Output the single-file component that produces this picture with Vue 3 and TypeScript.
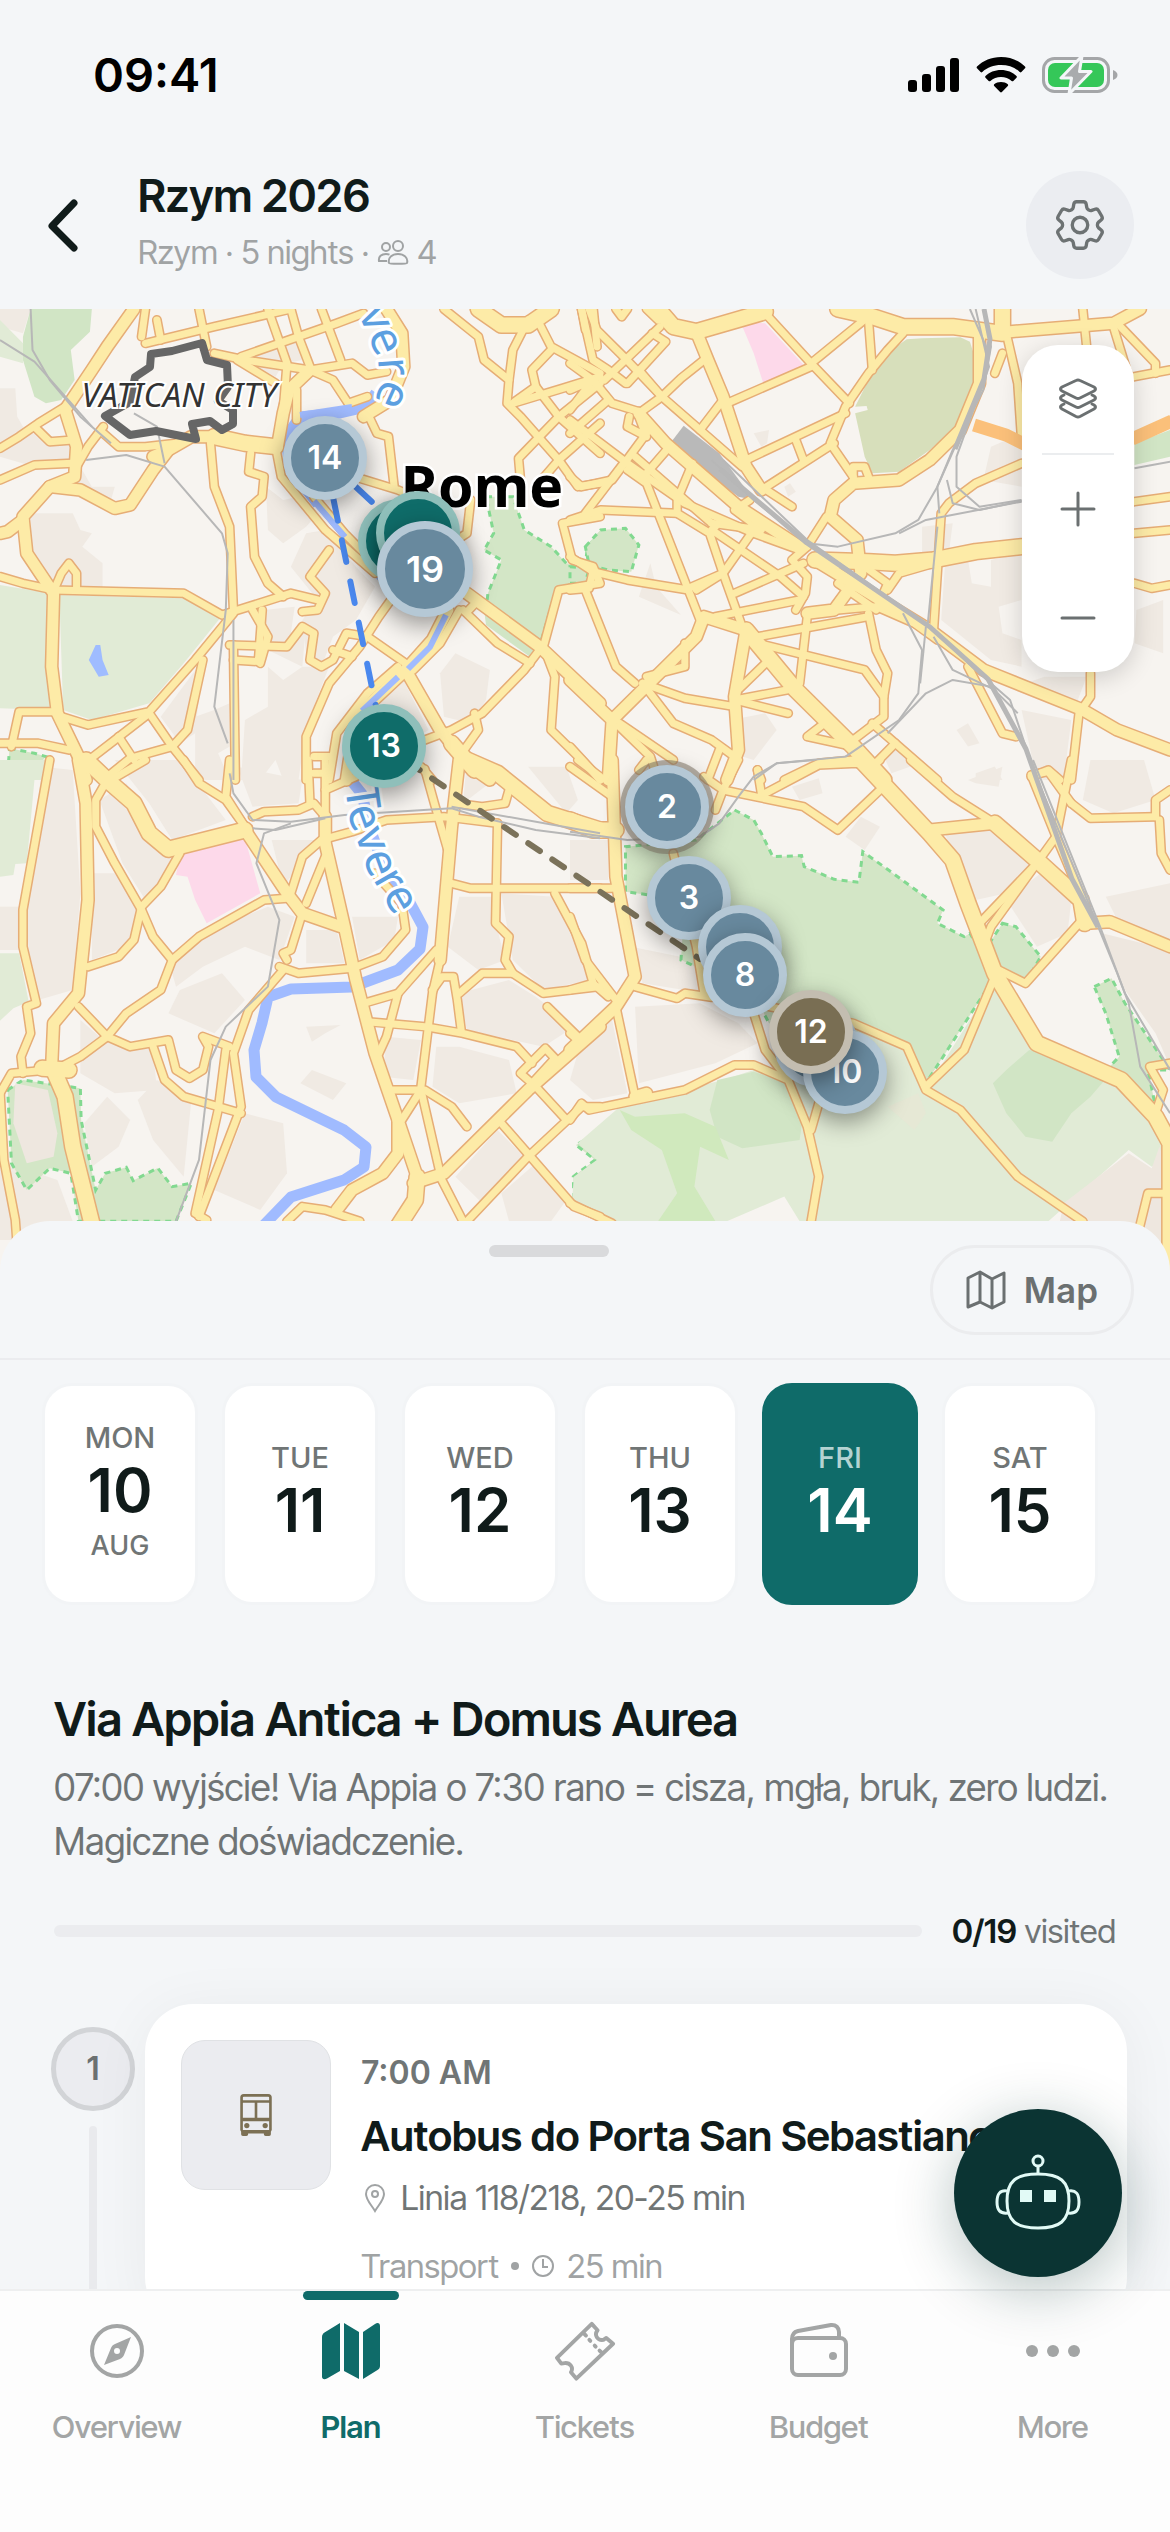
<script setup lang="ts">
import { ref } from 'vue'

interface Area { kind: string; d: string }
interface Tile {
  id: string
  transform: string
  areas: Area[]
  minor: string[]
  major: string[]
  trunk: string[]
  rail: string[]
}
interface Pin { id: string; label: string; x: number; y: number; tone: string; large?: boolean; stacked?: boolean }

const MAP_W = 1170
const MAP_H = 966

const tiles: Tile[] = [
  {
    id: 'nw',
    transform: 'translate(0 -9) scale(.3827 .3333)',
    areas: [
      { kind: 'built', d: '0,27 80,27 60,100 0,80' },
      { kind: 'built', d: '0,265 40,265 45,350 70,400 0,440' },
      { kind: 'built', d: '210,500 240,560 300,560 290,600 220,570 160,570' },
      { kind: 'built', d: '80,640 190,640 210,690 240,700 215,740 268,790 268,865 200,872 140,870 80,760' },
      { kind: 'built', d: '0,410 90,400 180,430 190,490 90,500 0,470' },
      { kind: 'built', d: '630,180 730,145 740,190 720,230' },
      { kind: 'built', d: '740,130 780,120 790,180 745,190' },
      { kind: 'built', d: '695,560 740,600 780,590 830,640 800,680 740,730 700,690' },
      { kind: 'built', d: '800,700 850,690 930,800 980,860 930,960 870,1010 840,1100 800,1060 790,960 830,900 760,800' },
      { kind: 'built', d: '690,930 770,920 760,1000 800,970 790,1100 700,1050' },
      { kind: 'built', d: '700,1100 740,1140 790,1100 860,1100 800,1280 780,1440 740,1440 720,1380 680,1440 630,1440 640,1260 700,1220' },
      { kind: 'built', d: '1150,1120 1190,1060 1280,1110 1270,1200 1230,1270 1160,1250' },
      { kind: 'built', d: '1000,1150 1050,1130 1120,1290 1060,1330 990,1240' },
      { kind: 'built', d: '420,1250 530,1080 510,1300 470,1330' },
      { kind: 'built', d: '510,1250 560,1230 600,1210 600,1340 570,1360 600,1440 510,1440' },
      { kind: 'park', d: '80,27 240,27 235,95 185,150 195,240 160,300 120,310 90,290 60,180 60,110' },
      { kind: 'soft', d: '0,60 60,130 60,190 0,170' },
      { kind: 'soft', d: '0,855 130,880 130,1230 0,1225' },
      { kind: 'soft', d: '155,885 480,895 575,955 480,1090 390,1210 240,1260 165,1230' },
      { kind: 'water', d: '250,1035 262,1035 268,1080 284,1125 258,1130 232,1080' },
      { kind: 'wood', d: '1270,590 1340,590 1370,690 1440,740 1480,790 1540,800 1530,850 1450,880 1410,1040 1270,930 1275,880 1310,780 1265,750 1290,700' },
      { kind: 'park', d: '1265,930 1400,1040 1390,1075 1270,975' },
      { kind: 'wood', d: '25,1345 90,1360 120,1370 70,1440 20,1420' },
      { kind: 'wood', d: '1568,700 1535,740 1530,790 1568,820' }
    ],
    minor: [
      '0,830 60,850 140,870 480,880 580,945 650,920 760,880 830,900',
      '0,445 50,410 100,370 170,320', '0,540 90,495 190,490', '90,380 130,425 190,420',
      '270,380 230,440 200,500', '270,400 310,440 380,440 460,430', '145,860 160,820 180,790 200,820 200,870',
      '550,430 560,560 600,680 610,930', '655,460 650,515 690,530 685,590 655,620 665,770 700,850 740,890',
      '660,930 700,1010 680,1090', '610,940 510,1080 390,1235 230,1275 160,1250',
      '0,1330 100,1330 180,1350', '30,1340 50,1235 140,1235', '390,1240 300,1320 210,1400', '390,1240 450,1340 520,1440',
      '530,1080 490,1290 450,1340 340,1375 270,1440', '310,1310 350,1380', '610,1035 615,1440', '610,1080 675,1085 685,930',
      '600,1035 750,1040 790,980 820,1000 810,1080 840,1100 870,1080 905,1000 960,1010',
      '860,750 810,830 850,880 830,930 790,935', '720,440 735,530 850,690 980,820',
      '820,590 900,700 960,770', '560,160 640,180 810,210 920,190 960,225 1010,215',
      '380,130 560,80 760,27', '630,170 880,70 950,40', '520,27 540,140', '700,27 750,190 740,330', '760,27 780,110 810,200',
      '840,27 890,180', '410,60 420,120', '380,27 370,110', '810,210 870,240 910,310 960,290',
      '620,180 720,250', '775,270 775,360', '960,340 985,400 1015,410 1030,560', '940,535 1040,570 1060,580',
      '1230,600 1220,700 1180,730', '1160,27 1250,110 1265,180 1330,240 1325,310 1360,350 1460,480 1510,560 1568,550',
      '1380,60 1340,150 1330,240', '1400,50 1440,140 1568,220', '1440,150 1390,210 1400,260 1345,305',
      '1340,310 1470,265 1568,230', '1568,250 1460,350 1355,475 1360,540', '1400,260 1460,350 1568,460',
      '1568,370 1460,480 1400,560', '1520,27 1530,90', '1550,27 1560,140', '1568,650 1470,670 1495,780 1550,800 1568,850 1460,870 1420,1040',
      '1210,930 1300,1030 1385,1090', '1410,1050 1370,1110 1260,1240 1180,1290 1110,1320', '1430,1070 1450,1130 1440,1290 1520,1380 1568,1440',
      '1250,900 1225,930', '1200,930 1150,1030 1080,1110', '1040,870 990,950 940,1040 860,1150 800,1310 800,1440',
      '1040,1100 960,1180 880,1300 860,1440', '960,1010 1060,1090', '870,1050 920,1070', '820,1370 860,1370', '1240,1240 1250,1290 1200,1370',
      '1100,1400 1130,1440'
    ],
    major: [
      '350,27 280,140 240,210 170,330 200,440 195,530 130,560 60,650 70,760 140,880 135,1100 150,1240 205,1370 225,1440',
      '130,560 210,570 300,625 340,615 400,510 440,450 500,410 560,410', '0,700 20,695 60,660',
      '1220,880 1410,1040 1568,1210', '1170,930 1130,1020 1060,1110 930,1250 905,1440', '1060,1110 1150,1290 1230,1400 1280,1440',
      '810,210 755,270 740,340 725,440', '1010,27 1050,100 1055,200 1020,300 950,350', '440,450 400,470'
    ],
    trunk: ['560,410 640,430 720,440', '1250,27 1310,75 1380,75 1440,27', '1180,1330 1240,1410'],
    rail: [
      '80,27 85,150 130,240 210,350 290,430', '0,120 90,185 240,380', '225,480 330,465 430,500 580,700 595,760 590,930 560,1220 595,1330',
      '350,340 410,380 430,490', '610,960 610,1440'
    ]
  },
  {
    id: 'ne',
    transform: 'translate(570 -9) scale(.3827 .3333)',
    areas: [
      { kind: 'built', d: '210,790 180,890 240,920 290,945 225,860' },
      { kind: 'built', d: '1100,440 1180,400 1180,560 1080,540' },
      { kind: 'built', d: '980,790 1040,780 1050,850 1100,860 1100,780 1180,760 1180,900 1120,920 1130,1000 1180,1020 1180,1100 1100,1080 970,960' },
      { kind: 'built', d: '1240,1130 1350,1130 1320,1220 1190,1150' },
      { kind: 'built', d: '1480,930 1550,900 1550,1060 1475,1030' },
      { kind: 'built', d: '1180,1230 1310,1260 1290,1440 1220,1440' },
      { kind: 'built', d: '420,1260 510,1240 540,1290 480,1380 450,1370' },
      { kind: 'built', d: '1010,1290 1040,1270 1070,1330 1040,1340' },
      { kind: 'built', d: '1060,1420 1110,1400 1130,1440 1060,1440' },
      { kind: 'built', d: '560,560 575,550 590,575 570,590' },
      { kind: 'built', d: '480,400 520,390 515,430 500,440' },
      { kind: 'built', d: '820,1370 870,1330 890,1400 840,1420' },
      { kind: 'built', d: '920,680 1000,670 990,760 920,760' },
      { kind: 'olive', d: '920,115 1020,112 1045,125 1060,180 1055,260 1010,380 940,450 860,515 790,520 770,470 745,340 778,330 775,318 745,320 780,240 840,150 880,118' },
      { kind: 'pink', d: '445,65 510,70 615,200 505,250 480,160' },
      { kind: 'wood', d: '40,740 80,690 145,685 180,735 160,815 100,810 50,795' },
      { kind: 'wood', d: '0,800 50,805 40,850 0,850' },
      { kind: 'park', d: '1475,430 1568,390 1568,470 1475,495' },
      { kind: 'yard', d: '297,377 390,460 480,600 440,590 375,535 265,425' }
    ],
    minor: [
      '510,40 630,190 730,310', '630,190 790,40', '780,60 790,210', '870,100 830,150 780,220 720,320 680,430 740,530',
      '410,310 630,200', '400,300 340,390', '720,340 460,480', '240,290 290,235 350,180', '50,27 70,90 140,170 240,290 450,500',
      '30,27 60,180 100,210 145,250', '0,190 60,240 110,310 180,335', '120,27 135,50 150,27', '200,27 230,60', '235,80 90,240', '215,100 250,125 150,250', '0,270 60,240 0,330',
      '180,210 240,290 180,340', '0,400 100,300', '0,360 150,490 300,610 480,700 600,750', '140,490 40,640', '0,530 30,560 110,540 200,400',
      '155,350 150,380 200,410 180,350', '0,660 80,630 280,640', '170,470 380,680', '260,440 200,520', '150,510 200,550 340,960', '320,490 280,600 280,640 365,700 400,820 450,980', '370,690 550,830 610,890',
      '480,690 400,820 310,865', '470,600 430,630 500,690 370,670', '580,620 500,560', '670,650 620,740', '310,870 150,840 60,815 0,770', '0,870 50,865 60,815',
      '40,870 120,1100 170,1150', '190,1150 300,1195 430,1220', '190,1150 270,1270 370,1320 430,1370', '120,1270 210,1370 230,1440',
      '130,1270 270,1380', '200,1130 300,1100 300,1030', '430,1200 590,1165', '430,1200 570,1240', '430,1180 520,1080',
      '490,1010 780,950', '620,950 600,1150', '490,1030 770,1110 820,1190 820,1250 740,1320', '780,940 800,1050 830,1120 820,1190',
      '620,740 580,780 620,830 615,880 590,930', '430,880 610,790', '380,950 600,900', '950,990 970,640 990,610 1060,550 1180,490',
      '830,870 860,820 950,790', '770,800 830,850 800,930 700,850', '1140,100 1170,250 1180,420', '1130,160 1110,220', '1430,70 1530,190 1530,220',
      '1340,27 1350,140', '1420,80 1460,230', '1475,230 1568,210', '1475,605 1568,590', '1475,700 1568,690', '1475,850 1520,865 1568,855',
      '1360,1120 1360,1190 1330,1240 1310,1440', '1040,1100 1130,1300 1165,1310', '790,1270 960,1440', '850,1330 790,1400',
      '740,1380 650,1390 560,1440', '740,1340 620,1310 665,1270', '490,1410 500,1440', '590,420 610,480', '500,570 690,430', '740,530 740,500 770,500 780,530',
      '0,1340 80,1440', '390,1350 360,1440', '1205,1430 1250,1410 1280,1440', '700,930 800,920 900,970 960,1020', '330,870 400,820'
    ],
    major: [
      '330,95 360,180 400,290 460,500 500,570', '180,340 250,430 440,620 600,740', '0,1140 110,1260 100,1440',
      '110,1260 330,1010 350,950 460,990', '460,990 430,1190 440,1350 410,1440', '640,780 940,990 1080,1110 1340,1230 1430,1290 1568,1350',
      '620,940 690,930 760,820 750,720 680,650 690,600 740,550 860,540 940,480 1020,390 1070,250 1070,90', '1150,95 1420,70 1490,27'
    ],
    trunk: [
      '230,27 270,80 330,95 510,35', '700,27 790,50 870,80 1000,80 1130,100 1130,27', '460,990 590,1170 740,1340 820,1440',
      '640,780 780,785 850,790 950,780 1060,755 1180,740'
    ],
    rail: [
      '370,480 480,600 620,730 700,740 850,700 910,660 960,560 1000,450 1080,270 1100,140 1080,27', '400,480 620,720 940,980 1050,1100 1150,1200 1220,1440',
      '1180,600 1070,620 1010,560 1010,470 1095,200 1060,27', '1180,605 930,660 860,700', '960,680 935,970', '985,540 1000,610 1070,630 1180,603',
      '870,940 920,1050 910,1180 860,1260 720,1370 540,1390 480,1440', '930,980 915,1150', '950,1010 1000,1110 1110,1170', '1170,1240 1100,1160 1000,1140 930,1180 830,1300',
      '1475,505 1568,485', '965,640 960,560 1010,430', '1045,27 1095,160'
    ]
  },
  {
    id: 'sw',
    transform: 'translate(0 451) scale(.3827 .3333)',
    areas: [
      { kind: 'built', d: '110,20 190,30 210,400 190,690 100,720 75,600 70,420' },
      { kind: 'built', d: '260,120 330,70 420,240 600,240 470,290 380,420 320,310' },
      { kind: 'built', d: '300,0 470,0 590,180 450,240 390,130' },
      { kind: 'built', d: '0,440 50,440 50,570 0,570' },
      { kind: 'built', d: '240,340 300,340 360,450 330,560 240,600' },
      { kind: 'built', d: '700,440 770,470 730,600 640,560 530,620 460,680 440,600 530,520' },
      { kind: 'built', d: '470,690 580,640 640,720 560,820 440,760' },
      { kind: 'built', d: '210,780 270,840 400,870 410,990 300,1000 210,940' },
      { kind: 'built', d: '360,1020 410,960 500,1020 480,1250 400,1140' },
      { kind: 'built', d: '640,1060 740,1090 750,1240 680,1350 560,1290' },
      { kind: 'built', d: '620,20 790,60 780,130 660,140' },
      { kind: 'built', d: '710,240 830,240 740,380' },
      { kind: 'built', d: '800,800 890,795 850,820 815,845' },
      { kind: 'built', d: '815,930 905,970 870,1020 785,970' },
      { kind: 'built', d: '800,510 880,510 900,610 800,610' },
      { kind: 'built', d: '920,470 1040,470 1030,540 940,600' },
      { kind: 'built', d: '1200,410 1290,410 1300,510 1320,600 1250,630 1170,560' },
      { kind: 'built', d: '1310,400 1450,410 1520,560 1540,660 1420,690 1340,600' },
      { kind: 'built', d: '1220,0 1290,60 1210,130' },
      { kind: 'built', d: '1380,20 1480,20 1510,120 1480,160' },
      { kind: 'built', d: '1200,700 1330,660 1400,710 1500,800 1420,860 1220,810' },
      { kind: 'built', d: '1010,830 1100,840 1080,960 1000,950' },
      { kind: 'built', d: '1140,860 1200,860 1330,900 1350,1000 1200,1030 1130,980' },
      { kind: 'built', d: '1190,1250 1300,1110 1370,1190 1260,1330' },
      { kind: 'built', d: '1400,1210 1480,1320 1440,1384 1330,1384 1310,1300' },
      { kind: 'built', d: '220,1090 280,1010 340,1080 310,1160 240,1220' },
      { kind: 'built', d: '0,1230 20,1210 150,1260 190,1384 60,1440 0,1440' },
      { kind: 'soft', d: '0,0 120,0 120,60 90,60 70,310 40,312 35,345 0,350' },
      { kind: 'soft', d: '0,580 50,580 75,725 35,745 0,782' },
      { kind: 'wood', d: '20,990 60,960 210,985 212,1080 250,1290 275,1240 330,1222 348,1262 412,1224 450,1280 500,1270 460,1384 205,1384 185,1240 130,1225 70,1290 30,1210' },
      { kind: 'built-solid', d: '40,970 125,990 150,1120 140,1190 70,1210 35,1090' },
      { kind: 'wood', d: '1568,1100 1545,1130 1505,1155 1555,1200 1498,1250 1500,1330 1568,1370' },
      { kind: 'pink', d: '470,285 640,235 680,400 540,490 510,420 490,350 460,345' }
    ],
    minor: [
      '480,0 520,70 590,120 640,200', '600,0 590,110 640,200', '660,170 690,155 780,150 820,130 850,170', '380,0 290,60',
      '280,60 250,120 250,200 300,310 370,450 400,530 450,600 420,690 330,760 280,830 210,890 160,920', '470,280 420,380 370,440 350,540 310,590 230,620',
      '450,600 520,530 690,420 750,415', '205,740 280,830 340,860 440,840 460,930 495,955 530,930 545,860 530,830 600,860',
      '400,860 430,960 480,1010 630,1060', '130,0 60,450 60,560 95,730 70,740 80,820 55,890 60,940', '0,1000 30,940 130,930', '0,990 10,1200 40,1380 50,1540',
      '740,630 650,750 610,880 630,1040 520,1370', '590,870 570,1050 510,1360 540,1380', '805,0 810,130', '850,0 850,170', '730,620 780,640 920,625 1000,590 1060,510 1050,430 980,340',
      '750,600 740,580 760,570 790,460', '760,400 790,290 840,240 920,215 1010,180 1160,170 1300,190', '1190,130 1260,140 1320,130 1330,90', '800,430 850,290', '850,90 930,50',
      '820,40 850,40', '950,730 1040,700 1140,570', '1040,700 1010,830 990,880', '960,785 1110,800 1210,820 1350,860 1390,910', '1110,27 1135,130 1170,270',
      '1180,370 1230,385 1568,385', '1300,190 1295,490 1330,530 1320,600 1340,640 1420,700 1568,680', '1130,690 1155,650 1185,650 1195,720 1205,810',
      '1200,700 1260,640 1340,640', '1450,400 1520,550 1550,670', '1150,1250 1210,1384', '1010,990 1110,990 1180,1040 1220,1100', '1100,990 1150,1240',
      '1100,990 1050,1080', '1430,740 1510,830', '1400,980 1480,1080', '1310,1090 1500,1340 1568,1370', '1220,1384 1380,1190 1520,1040 1568,1040',
      '750,1384 790,1340 850,1350 940,1384', '1360,940 1425,865 1450,895 1390,970 1360,940', '1150,600 1130,700 1100,980', '1510,0 1568,50'
    ],
    major: [
      '205,0 225,130 230,420 205,700 140,790 135,920', '640,210 750,400 790,460 890,500', '1200,0 1180,200 1150,600',
      '850,170 850,250 900,500 930,660 980,880 1040,1080 1090,1250', '1040,1080 1040,1180 1000,1240 920,1290 880,1350', '1568,800 1380,990 1160,1240 1080,1270'
    ],
    trunk: [
      '225,0 280,60 350,130 390,220 440,268 640,210', '140,930 170,1010 190,1160 240,1390', '1220,0 1300,40 1430,160 1568,210', '1090,1250 1085,1320 1040,1400', '110,925 180,930'
    ],
    rail: [
      '600,40 610,100 660,180 760,185 900,165 1180,145 1250,170 1400,210 1568,235', '1180,140 1568,220', '760,190 690,220 670,310 730,480 700,680 590,800 550,900 520,1200 460,1384', '660,205 720,210 850,175'
    ]
  },
  {
    id: 'se',
    transform: 'translate(570 451) scale(.3827 .3333)',
    areas: [
      { kind: 'built', d: '580,80 650,55 660,100 600,120' },
      { kind: 'built', d: '760,170 810,200 770,270 720,230' },
      { kind: 'built', d: '1040,60 1130,20 1120,80 1060,70' },
      { kind: 'built', d: '980,220 1110,210 1210,310 1140,400 1060,420 1010,320' },
      { kind: 'built', d: '1360,0 1500,0 1530,120 1420,160 1340,120' },
      { kind: 'built', d: '1140,420 1230,340 1310,420 1300,520 1220,560' },
      { kind: 'built', d: '1400,410 1568,370 1568,540 1430,480' },
      { kind: 'built-solid', d: '1390,520 1568,570 1568,920 1530,820 1450,690' },
      { kind: 'built', d: '0,520 40,600 20,660 0,660' },
      { kind: 'built', d: '170,740 340,730 440,790 490,850 380,910 180,970' },
      { kind: 'built', d: '20,880 110,780 150,1000 60,1020 0,960' },
      { kind: 'built', d: '160,560 330,600 350,700 190,670' },
      { kind: 'built', d: '0,240 100,240 100,360 0,360' },
      { kind: 'wood', d: '430,150 480,180 500,220 530,290 605,287 612,320 690,358 755,367 765,275 820,320 975,450 960,490 1030,530 1045,520 1110,650 930,970 880,870 740,790 520,790 480,700 290,600 300,420 145,395 145,260 330,240' },
      { kind: 'soft', d: '130,1040 260,1000 400,960 480,930 560,960 520,780 740,790 880,860 930,990 1110,660 1220,850 1440,960 1568,1150 1568,1200 1520,1220 1460,1170 1250,1384 600,1384 560,1310 410,1384 100,1384 5,1330 10,1250 70,1200 20,1150' },
      { kind: 'park', d: '385,960 480,935 570,970 610,1060 600,1140 450,1165 385,1130 365,1050' },
      { kind: 'park', d: '1140,930 1200,870 1420,930 1360,1010 1310,1060 1260,1145 1190,1130 1140,1060 1105,970' },
      { kind: 'lawn', d: '130,1050 170,1070 300,1060 380,1100 415,1200 340,1160 325,1280 380,1384 230,1384 280,1300 240,1170 160,1110' },
      { kind: 'pale', d: '830,1040 910,1000 930,1060 900,1110' },
      { kind: 'wood', d: '1130,490 1165,500 1230,590 1190,670 1120,630 1090,560' },
      { kind: 'wood', d: '1370,680 1415,655 1450,730 1568,930 1510,930 1530,1040 1410,920 1435,890 1400,760' },
      { kind: 'built-solid', d: '1460,1180 1520,1225 1540,1160 1568,1250 1568,1500 1380,1500 1280,1384 1290,1330' }
    ],
    minor: [
      '0,385 110,385', '0,470 40,600 120,720', '0,690 60,670 100,710', '0,20 110,110', '170,680 280,715 300,700 370,712 450,700 520,740 740,790 880,860 930,990 1020,1050 1170,1250 1340,1384',
      '120,740 170,1010', '0,1080 30,1030 50,1050 300,990 430,915 480,915 570,960 620,1100 650,1250 630,1384', '480,760 510,870 570,960', '650,1030 630,1110',
      '270,280 330,560 350,700', '400,90 610,140 700,210 810,90', '200,0 180,30', '350,50 400,90 440,0', '500,100 490,30', '510,100 650,15 750,10 790,20 810,0',
      '890,0 1000,110 1110,190', '1220,310 1070,490', '1080,560 1100,500 1270,230 1310,0', '1330,490 1190,670 1120,630', '1110,650 1030,870 930,980',
      '1310,130 1250,35 1205,45 1270,230 1340,420', '1310,130 1360,175 1530,170', '1530,170 1530,120 1568,90', '1540,180 1545,280 1568,330', '1568,910 1515,920 1550,990 1530,1060',
      '1480,1440 1510,1300 1568,1300', '0,1330 110,1390', '0,820 30,850', '400,90 380,150'
    ],
    major: ['110,0 120,350 170,650 120,740 0,870', '940,210 1110,190', '1350,490 1410,485 1568,560', '170,1010 200,1000'],
    trunk: ['0,180 60,210 120,210', '760,0 940,220 1000,300 1040,430 1110,640 1220,850 1440,960 1530,1070 1568,1150 1568,1540', '1110,190 1220,300 1335,420 1345,490'],
    rail: ['1200,0 1280,220 1380,500 1430,640 1460,730 1490,920 1568,1060', '1210,0 1385,500 1450,700 1568,930', '640,0 540,10 480,50 440,110 390,190 340,230 150,240 0,215']
  }
]

const pins: Pin[] = [
  { id: 'p2', label: '2', x: 667, y: 498, tone: 'slate', stacked: true },
  { id: 'p3', label: '3', x: 689, y: 589, tone: 'slate' },
  { id: 'p7', label: '', x: 740, y: 638, tone: 'slate' },
  { id: 'p8', label: '8', x: 745, y: 666, tone: 'slate' },
  { id: 'p9', label: '', x: 816, y: 736, tone: 'slate' },
  { id: 'p10', label: '10', x: 845, y: 763, tone: 'slate' },
  { id: 'p12', label: '12', x: 811, y: 723, tone: 'umber' },
  { id: 'p13', label: '13', x: 384, y: 437, tone: 'teal' },
  { id: 'p14', label: '14', x: 325, y: 149, tone: 'slate' },
  { id: 'p15', label: '', x: 400, y: 232, tone: 'teal' },
  { id: 'p16', label: '', x: 418, y: 224, tone: 'teal' },
  { id: 'p19', label: '19', x: 425, y: 260, tone: 'slate', large: true }
]

const days = [
  { name: 'MON', date: 10, month: 'AUG' },
  { name: 'TUE', date: 11 },
  { name: 'WED', date: 12 },
  { name: 'THU', date: 13 },
  { name: 'FRI', date: 14 },
  { name: 'SAT', date: 15 }
]
const selectedDay = ref(14)

const tabs = ['Overview', 'Plan', 'Tickets', 'Budget', 'More']
const activeTab = ref('Plan')

const pinStyle = (pin: Pin) => ({
  left: `${(pin.x / MAP_W) * 100}%`,
  top: `${(pin.y / MAP_H) * 100}%`
})
</script>

<template>
  <div class="screen">
    <div class="status">
      <span class="clock">09:41</span>
      <div class="status-icons">
        <svg width="52" height="36" viewBox="0 0 52 36" aria-hidden="true">
          <rect x="0" y="23" width="9" height="12" rx="3" />
          <rect x="14" y="17" width="9" height="18" rx="3" />
          <rect x="28" y="9" width="9" height="26" rx="3" />
          <rect x="42" y="1" width="9" height="34" rx="3" />
        </svg>
        <svg width="50" height="36" viewBox="0 0 50 36" aria-hidden="true">
          <path d="M25 0C34.500 0 43 3.600 49 9.600c.5.500.5 1.200 0 1.700l-3.600 3.700c-.5.500-1.200.5-1.700 0C38.700 10.300 32.300 8 25 8S11.300 10.300 6.300 15c-.5.500-1.200.5-1.700 0L1 11.300c-.5-.5-.5-1.200 0-1.700C7 3.600 15.500 0 25 0Z" />
          <path d="M25 13c6.200 0 11.800 2.300 15.500 6 .5.500.5 1.200 0 1.700l-3.200 3.200c-.5.500-1.200.5-1.700 0-2.800-2.500-6.500-3.900-10.600-3.900s-7.800 1.400-10.600 3.900c-.5.500-1.200.5-1.700 0L9.500 20.700c-.5-.5-.5-1.200 0-1.700C13.200 15.300 18.800 13 25 13Z" />
          <path d="M25 25c2.800 0 5 .8 6.800 2.200.5.500.5 1.200 0 1.700l-5.900 6.200c-.5.500-1.300.5-1.800 0l-5.900-6.200c-.5-.5-.5-1.200 0-1.700C20 25.800 22.200 25 25 25Z" />
        </svg>
        <svg class="battery" width="76" height="38" viewBox="0 0 76 38" aria-hidden="true">
          <rect x="1.500" y="2.500" width="65" height="33" rx="11" fill="none" stroke="#a4a6a8" stroke-width="3" />
          <path d="M71 14c3 1 4.500 3 4.500 5s-1.500 4-4.500 5Z" fill="#a4a6a8" />
          <rect x="6" y="7" width="56" height="24" rx="7" fill="#35c759" />
          <path d="M40 0 19 22h10.500L27 38 49 15.500H37.500Z" fill="#a9abad" stroke="#f4f6f8" stroke-width="3" stroke-linejoin="round" />
        </svg>
      </div>
    </div>

    <header class="top">
      <button class="back" type="button" aria-label="Back">
        <svg width="48" height="60" viewBox="0 0 48 60" aria-hidden="true"><path d="M38 8 16 31l22 22" /></svg>
      </button>
      <div class="trip">
        <h1>Rzym 2026</h1>
        <p>
          <span>Rzym · 5 nights ·</span>
          <svg width="32" height="26" viewBox="0 0 32 26" aria-hidden="true">
            <circle cx="21" cy="7" r="5" /><circle cx="9" cy="8" r="4" />
            <path d="M12 24c-1.500-5 3-9 9-9s10.500 4 9 9c-.5 1-17.500 1-18 0ZM10 22H2c-.8-4.500 2.500-7 7-7 1.500 0 2.500.2 3.500.6" />
          </svg>
          <span>4</span>
        </p>
      </div>
      <button class="gear" type="button" aria-label="Settings">
        <svg width="62" height="62" viewBox="0 0 24 24" aria-hidden="true">
          <path d="M9.594 3.940c.09-.542.56-.94 1.110-.94h2.593c.55 0 1.020.398 1.110.94l.213 1.281c.063.374.313.686.645.87.074.04.147.083.22.127.325.196.72.257 1.075.124l1.217-.456a1.125 1.125 0 0 1 1.370.49l1.296 2.247a1.125 1.125 0 0 1-.26 1.431l-1.003.827c-.293.241-.438.613-.43.992a7.723 7.723 0 0 1 0 .255c-.008.378.137.75.43.991l1.004.827c.424.35.534.955.26 1.430l-1.298 2.247a1.125 1.125 0 0 1-1.369.491l-1.217-.456c-.355-.133-.75-.072-1.076.124a6.470 6.470 0 0 1-.22.128c-.331.183-.581.495-.644.869l-.213 1.281c-.09.543-.56.94-1.110.94h-2.594c-.55 0-1.019-.398-1.110-.94l-.213-1.281c-.062-.374-.312-.686-.644-.87a6.520 6.520 0 0 1-.22-.127c-.325-.196-.72-.257-1.076-.124l-1.217.456a1.125 1.125 0 0 1-1.369-.49l-1.297-2.247a1.125 1.125 0 0 1 .26-1.431l1.004-.827c.292-.24.437-.613.43-.991a6.932 6.932 0 0 1 0-.255c.007-.38-.138-.751-.43-.992l-1.004-.827a1.125 1.125 0 0 1-.26-1.430l1.297-2.247a1.125 1.125 0 0 1 1.370-.491l1.216.456c.356.133.751.072 1.076-.124.072-.044.146-.086.22-.128.332-.183.582-.495.644-.869l.214-1.280Z" />
          <circle cx="12" cy="12" r="3" />
        </svg>
      </button>
    </header>

    <main class="body">
      <section class="map" aria-label="Map of Rome">
        <svg class="canvas" :viewBox="`0 0 ${MAP_W} ${MAP_H}`" preserveAspectRatio="none" aria-hidden="true">
          <g v-for="t in tiles" :key="t.id + 'a'" :transform="t.transform">
            <polygon v-for="(a, i) in t.areas" :key="i" :points="a.d" :class="a.kind" />
          </g>
          <path class="river" d="M376 84 366 98 340 104 300 108 286 128 290 160 318 195" />
          <path class="river narrow" d="M318 195 362 250 400 290 M446 300 428 338 402 365" />
          <path class="river" d="M402 365 358 405 348 440 350 470 362 485 370 520 385 560 408 590 423 618 420 640 398 661 352 678 291 680 268 688 262 714 254 741 256 768 276 788 344 821 366 838 364 858 344 871 291 888 262 918" />
          <template v-for="w in ['minor', 'major', 'trunk'] as const" :key="w">
            <g v-for="t in tiles" :key="t.id + w" :transform="t.transform" :class="['casing', w]">
              <polyline v-for="(r, i) in t[w]" :key="i" :points="r" />
            </g>
          </template>
          <template v-for="w in ['minor', 'major', 'trunk'] as const" :key="w + 'f'">
            <g v-for="t in tiles" :key="t.id + w" :transform="t.transform" :class="['paving', w]">
              <polyline v-for="(r, i) in t[w]" :key="i" :points="r" />
            </g>
          </template>
          <path class="river narrow" d="M314 192 345 228M446 306 430 338 408 360M398 368 362 402M300 106 352 98" />
          <path class="motorway" d="M974 116 1006 126 1030 138M1132 130 1172 112" />
          <g v-for="t in tiles" :key="t.id + 'r'" :transform="t.transform" class="rails">
            <polyline v-for="(r, i) in t.rail" :key="i" :points="r" />
          </g>
          <path class="thick-rail" d="M720 160 807 234 930 318 988 370 1026 440 1072 570 1098 618M984 0 990 30 984 70 955 140" />
          <path class="border" d="M151 45 172 42 202 34 207 51 227 56 228 78 218 92 233 101 233 115 222 121 210 112 192 115 196 130 156 122 130 126 105 107 130 93 135 68 150 58Z" />
          <text class="country" x="179" y="98">VATICAN CITY</text>
          <text class="city" x="482" y="198">Rome</text>
          <path id="river-north" d="M358 4 378 50 380 78 362 118 350 140" fill="none" />
          <path id="river-south" d="M345 478 350 512 368 562 396 610 430 660" fill="none" />
          <text class="stream"><textPath href="#river-north">vere</textPath></text>
          <text class="stream"><textPath href="#river-south">Tevere</textPath></text>
          <path class="route blue" d="M325 149 384 437" />
          <path class="route blue" d="M325 149 418 236" />
          <path class="route umber-line" d="M384 437 700 650" />
        </svg>
        <button
          v-for="pin in pins"
          :key="pin.id"
          type="button"
          :class="['pin', pin.tone, { large: pin.large, stacked: pin.stacked }]"
          :style="pinStyle(pin)"
          :aria-label="pin.label ? undefined : 'Stop'"
        >{{ pin.label }}</button>
        <div class="tools">
          <button type="button" aria-label="Layers">
            <svg width="44" height="44" viewBox="0 0 44 44" aria-hidden="true">
              <path d="M20 2.500q2-1 4 0L38 9q3 2 0 4l-14 7q-2 1-4 0L6 13q-3-2 0-4Z" />
              <path d="m8 17-2 1q-3 2 0 4l14 7q2 1 4 0l14-7q3-2 0-4l-2-1" />
              <path d="m8 26-2 1q-3 2 0 4l14 7.500q2 1 4 0L38 31q3-2 0-4l-2-1" />
            </svg>
          </button>
          <hr>
          <button type="button" aria-label="Zoom in">
            <svg width="44" height="44" viewBox="0 0 44 44" aria-hidden="true"><path d="M22 6v32M6 22h32" /></svg>
          </button>
          <button type="button" aria-label="Zoom out">
            <svg width="44" height="44" viewBox="0 0 44 44" aria-hidden="true"><path d="M6 22h32" /></svg>
          </button>
        </div>
      </section>

      <section class="sheet">
        <div class="sheet-head">
          <span class="handle"></span>
          <button class="map-button" type="button">
            <svg width="40" height="40" viewBox="0 0 40 40" aria-hidden="true">
              <path d="M2 8 14 2v30L2 37ZM14 2l12 7v29l-12-6M26 9l12-6v29l-12 6" />
            </svg>
            Map
          </button>
        </div>

        <div class="days">
          <button
            v-for="d in days"
            :key="d.date"
            type="button"
            :class="['day', { active: d.date === selectedDay }]"
            @click="selectedDay = d.date"
          >
            <span class="name">{{ d.name }}</span>
            <span class="date">{{ d.date }}</span>
            <span v-if="d.month" class="month">{{ d.month }}</span>
          </button>
        </div>

        <div class="intro">
          <h2>Via Appia Antica + Domus Aurea</h2>
          <p>07:00 wyjście! Via Appia o 7:30 rano = cisza, mgła, bruk, zero ludzi. Magiczne doświadczenie.</p>
          <div class="progress">
            <span class="track"></span>
            <span class="count"><b>0/19</b> visited</span>
          </div>
        </div>

        <div class="stop">
          <div class="rail-col">
            <span class="index">1</span>
            <span class="line"></span>
          </div>
          <article class="card">
            <div class="thumb">
              <svg width="36" height="48" viewBox="0 0 36 48" aria-hidden="true">
                <path fill-rule="evenodd" d="M4 0h28a4 4 0 0 1 4 4v37l-1 2v3a2 2 0 0 1-2 2h-4a2 2 0 0 1-2-2v-1H9v1a2 2 0 0 1-2 2H3a2 2 0 0 1-2-2v-3l-1-2V4a4 4 0 0 1 4-4ZM4 3a1 1 0 0 0-1 1v3h30V4a1 1 0 0 0-1-1ZM3 10v17h13.500V10Zm16.500 0v17H33V10ZM3 31v10h30V31Z" />
                <circle cx="7.500" cy="36" r="3" /><circle cx="28.500" cy="36" r="3" />
              </svg>
            </div>
            <div class="info">
              <span class="time">7:00 AM</span>
              <h3>Autobus do Porta San Sebastiano</h3>
              <p class="place">
                <svg width="28" height="30" viewBox="0 0 28 30" aria-hidden="true">
                  <path d="M14 28C10.500 22 5 17 5 11a9 9 0 0 1 18 0c0 6-5.500 11-9 17Z" /><circle cx="14" cy="11" r="3" />
                </svg>
                Linia 118/218, 20-25 min
              </p>
              <p class="meta">
                Transport <i></i>
                <svg width="24" height="24" viewBox="0 0 24 24" aria-hidden="true"><circle cx="12" cy="12" r="10" /><path d="M12 5v8h5" /></svg>
                25 min
              </p>
            </div>
          </article>
        </div>
      </section>
    </main>

    <nav class="tabs" aria-label="Trip">
      <a v-for="t in tabs" :key="t" href="#" :class="{ on: t === activeTab }" @click.prevent="activeTab = t">
        <svg v-if="t === 'Overview'" width="60" height="60" viewBox="0 0 60 60" aria-hidden="true">
          <circle class="s" cx="30" cy="30" r="25" />
          <path fill-rule="evenodd" d="m44 16-7 18c-.8 1.800-2 3-4 4l-16 6 7-17c.8-2 2-3.200 4-4ZM30 27a3 3 0 1 0 0 6 3 3 0 0 0 0-6Z" />
        </svg>
        <svg v-else-if="t === 'Plan'" width="60" height="60" viewBox="0 0 60 60" aria-hidden="true">
          <path d="M19 2v48L6 57.500c-3 1.500-5 .5-5-2V16c0-2 1-3.500 2.500-4.500ZM23 2l15 9v47l-15-8ZM42 11 54 3c3-2 5-.5 5 2v40c0 2-1 3-2.500 4L42 58Z" />
        </svg>
        <svg v-else-if="t === 'Tickets'" width="62" height="62" viewBox="0 0 62 62" aria-hidden="true">
          <path class="s" d="m38 3 6 6.500c-4 5 0 11 6 10l3-2 7 6-38 36-5.500-6.500c3-5-1-10-6.500-9.500L6.500 44 2 38Z" />
          <path class="s" d="m30 13 2 2m3.500 4.500 1 1m4.500 5 1 1m4 4 2 2" stroke-linecap="round" />
        </svg>
        <svg v-else-if="t === 'Budget'" width="60" height="60" viewBox="0 0 60 60" aria-hidden="true">
          <rect class="s" x="3" y="17" width="54" height="37" rx="6" />
          <path class="s" d="M3 24v-6c0-5 2-7 6-8l33-6c5-.5 8 3 8 7v6" />
          <circle cx="44" cy="35" r="4" />
        </svg>
        <svg v-else width="60" height="60" viewBox="0 0 60 60" aria-hidden="true">
          <circle cx="9" cy="30" r="6" /><circle cx="30" cy="30" r="6" /><circle cx="51" cy="30" r="6" />
        </svg>
        <span>{{ t }}</span>
      </a>
    </nav>

    <button class="assistant" type="button" aria-label="Assistant">
      <svg width="96" height="96" viewBox="0 0 96 96" aria-hidden="true">
        <circle cx="48" cy="16" r="5" /><path d="M48 21v8" />
        <path d="M48 29c22 0 31 7 31 27S70 83 48 83 17 76 17 56s9-27 31-27Z" />
        <path d="M17 46c-7-1-10 3-10 11s3 12 11 11M79 46c7-1 10 3 10 11s-3 12-11 11" />
        <rect x="30" y="45" width="12" height="12" /><rect x="54" y="45" width="12" height="12" />
      </svg>
    </button>
  </div>
</template>

<style>
body { margin: 0; background: #f4f6f8; }
</style>

<style scoped>
.screen {
  position: relative;
  display: flex;
  flex-direction: column;
  height: 100vh;
  overflow: hidden;
  background: #f4f6f8;
  color: #101b1a;
  font-family: "Inter Tight", Inter, "Liberation Sans", sans-serif;
}
button { margin: 0; padding: 0; border: 0; background: none; font: inherit; color: inherit; }
h1, h2, h3, p { margin: 0; }
h1, h2, h3 { font-weight: 600; }
svg { display: block; flex: none; }

.status {
  display: flex;
  align-items: center;
  justify-content: space-between;
  height: 150px;
  flex: none;
  padding: 0 52px 0 93px;
  box-sizing: border-box;
  color: #000;
}
.clock, .pin, .map-button, .day, .index, .time { font-family: Inter, "Liberation Sans", sans-serif; }
.clock { font-size: 47px; line-height: 56px; font-weight: 600; }
.status-icons { display: flex; align-items: center; gap: 16px; }

.top {
  display: flex;
  align-items: center;
  flex: none;
  padding: 21px 36px 30px;
}
.back { margin-right: 54px; }
.back path { fill: none; stroke: #101b1a; stroke-width: 7; stroke-linecap: round; stroke-linejoin: round; }
.trip { flex: 1; margin: -2px 0; }
.trip h1 { font-size: 45px; line-height: 54px; }
.trip p {
  display: flex;
  align-items: center;
  gap: 8px;
  font-size: 33px;
  line-height: 58px;
  color: #a0a3a4;
}
.trip p svg { fill: none; stroke: #a0a3a4; stroke-width: 2; }
.gear {
  display: grid;
  place-items: center;
  width: 108px;
  height: 108px;
  border-radius: 50%;
  background: #ebedf1;
}
.gear svg { fill: none; stroke: #6d7273; stroke-width: 1.300; stroke-linejoin: round; }

.body { flex: 1; min-height: 0; overflow-y: auto; scrollbar-width: none; }

.map { position: relative; aspect-ratio: 1170 / 966; background: #f7f4f0; overflow: hidden; }
.canvas { width: 100%; height: 100%; }
.built { fill: #f0eae3; }
.built-solid { fill: #eee7df; }
.pale { fill: #e6e8d5; }
.park { fill: #d1e5c5; }
.soft { fill: #e1ebd6; }
.lawn { fill: #d0e9bd; }
.olive { fill: #d7dfbb; }
.pink { fill: #fdd9ea; }
.water { fill: #9fbcff; }
.yard { fill: #b9b9b9; }
.wood { fill: #d3e6c6; stroke: #82d990; stroke-width: 3; stroke-dasharray: 6 5; vector-effect: non-scaling-stroke; }
.river { fill: none; stroke: #a0bbff; stroke-width: 11; stroke-linejoin: round; }
.river.narrow { stroke-width: 6; }
.casing polyline, .paving polyline { fill: none; stroke-linejoin: round; stroke-linecap: round; vector-effect: non-scaling-stroke; }
.casing { stroke: #e6ad76; }
.paving { stroke: #fdeba7; }
.casing.minor { stroke-width: 10; }
.paving.minor { stroke-width: 7; }
.casing.major { stroke-width: 14; }
.paving.major { stroke-width: 11; }
.casing.trunk { stroke-width: 18; }
.paving.trunk { stroke-width: 15; }
.motorway { fill: none; stroke: #fbc07a; stroke-width: 13; }
.rails polyline { fill: none; stroke: #b7b7b7; stroke-width: 2; stroke-linejoin: round; vector-effect: non-scaling-stroke; }
.thick-rail { fill: none; stroke: #b7b7b7; stroke-width: 5; stroke-linejoin: round; }
.border { fill: none; stroke: #666; stroke-width: 8; stroke-linejoin: round; }
.country { font: italic 33px "Noto Sans", sans-serif; fill: #333; text-anchor: middle; stroke: #fff; stroke-width: 4; paint-order: stroke; }
.city { font: bold 57px "Noto Sans", sans-serif; fill: #000; text-anchor: middle; stroke: #fff; stroke-width: 5; paint-order: stroke; }
.stream { font: 46px "Noto Sans", sans-serif; fill: #5c9fe0; stroke: #fff; stroke-width: 6; paint-order: stroke; stroke-linejoin: round; }
.route { fill: none; stroke-width: 6; stroke-linecap: round; }
.blue { stroke: #4a88ee; stroke-dasharray: 22 20; }
.umber-line { stroke: #7b725a; stroke-dasharray: 14 15; }

.pin {
  position: absolute;
  width: 84px;
  height: 84px;
  box-sizing: border-box;
  border: 8px solid;
  border-radius: 50%;
  transform: translate(-50%, -50%);
  color: #fff;
  font-size: 32px;
  line-height: 68px;
  font-weight: 600;
  box-shadow: 0 8px 24px rgba(0, 0, 0, .4);
}
.pin.large { width: 96px; height: 96px; font-size: 36px; line-height: 80px; }
.pin.slate { background: #68899e; border-color: #b5c8d5; }
.pin.teal { background: #0f6c69; border-color: #8fbfba; }
.pin.umber { background: #796e53; border-color: #c3bdb0; }
.pin.stacked { box-shadow: 0 0 0 5px rgba(120, 112, 96, .55), 0 8px 24px rgba(0, 0, 0, .4); }

.tools {
  position: absolute;
  top: 36px;
  right: 36px;
  display: flex;
  flex-direction: column;
  align-items: center;
  width: 112px;
  border-radius: 36px;
  background: #fff;
  box-shadow: 0 6px 24px rgba(0, 0, 0, .16);
}
.tools button { display: grid; place-items: center; width: 112px; height: 109px; }
.tools hr { width: 72px; height: 2px; margin: -1px 0; border: 0; background: #ebedef; }
.tools svg { fill: none; stroke: #6b7071; stroke-width: 3; stroke-linejoin: round; stroke-linecap: round; }

.sheet {
  position: relative;
  margin-top: -54px;
  border-radius: 50px 50px 0 0;
  background: #f4f6f8;
}
.sheet-head {
  display: grid;
  grid-template-columns: 453fr 120px 525fr;
  padding: 24px 36px 23px;
  border-bottom: 2px solid #ebecef;
}
.handle { grid-column: 2; width: 120px; height: 12px; border-radius: 6px; background: #d9dadc; }
.map-button {
  display: flex;
  align-items: center;
  justify-self: end;
  gap: 18px;
  height: 90px;
  padding: 0 33px;
  border: 3px solid #ebecee;
  border-radius: 45px;
  box-sizing: border-box;
  color: #6b7071;
  font-size: 35px;
  font-weight: 600;
}
.map-button svg { fill: none; stroke: #6b7071; stroke-width: 3; stroke-linejoin: round; }

.days { display: flex; gap: 24px; margin-top: 23px; padding: 0 42px; }
.day {
  display: flex;
  flex: 0 0 156px;
  flex-direction: column;
  align-items: center;
  justify-content: center;
  height: 222px;
  box-sizing: border-box;
  border: 3px solid #f2f4f6;
  border-radius: 30px;
  background: #fff;
}
.day .name { font-size: 29px; line-height: 32px; font-weight: 500; color: #707575; }
.day .date { font-size: 60px; line-height: 72px; font-weight: 600; }
.day .month { font-size: 27px; line-height: 40px; font-weight: 500; color: #707575; }
.day.active { background: #0f6b69; border-color: #0f6b69; color: #fff; }
.day.active .name { color: #b4d3d2; }

.intro { padding: 84px 54px 0; }
.intro h2 { font-size: 47px; line-height: 60px; }
.intro p { margin-top: 12px; font-size: 37px; line-height: 54px; color: #6f7475; }
.progress { display: flex; align-items: center; gap: 30px; margin-top: 41px; }
.track { flex: 1; height: 12px; border-radius: 6px; background: #ebecef; }
.count { font-size: 33px; line-height: 42px; color: #6f7475; }
.count b { font-weight: 600; color: #101b1a; }

.stop { display: flex; gap: 10px; margin-top: 52px; padding: 0 43px 0 51px; }
.rail-col { display: flex; flex-direction: column; align-items: center; padding-top: 23px; }
.index {
  width: 84px;
  height: 84px;
  box-sizing: border-box;
  border: 5px solid #d2d4d7;
  border-radius: 50%;
  background: #ebecf0;
  color: #6b7071;
  font-size: 32px;
  line-height: 74px;
  font-weight: 600;
  text-align: center;
}
.line { flex: 1; width: 8px; margin-top: 15px; border-radius: 4px; background: #e9eaed; }
.card {
  display: flex;
  flex: 1;
  gap: 30px;
  padding: 36px;
  border-radius: 48px;
  background: #fff;
  box-shadow: 0 6px 60px rgba(0, 0, 0, .05);
}
.thumb {
  display: grid;
  place-items: center;
  flex: none;
  width: 150px;
  height: 150px;
  box-sizing: border-box;
  border: 1px solid #e0e2e5;
  border-radius: 24px;
  background: #ebecf0;
}
.thumb svg { fill: #7c7054; height: 42px; }
.info { display: flex; flex-direction: column; padding-top: 9px; }
.time { font-size: 32px; line-height: 48px; font-weight: 600; color: #707575; }
.info h3 { margin-top: 12px; font-size: 42px; line-height: 54px; white-space: nowrap; }
.place, .meta { display: flex; align-items: center; gap: 12px; line-height: 46px; }
.place { margin-top: 12px; font-size: 34px; color: #707575; }
.meta { margin-top: 22px; font-size: 33px; color: #a0a3a4; }
.meta i { width: 8px; height: 8px; border-radius: 50%; background: #a0a3a4; }
.place svg, .meta svg { fill: none; stroke: #a0a3a4; stroke-width: 2; }

.tabs {
  display: grid;
  grid-template-columns: repeat(5, 1fr);
  flex: none;
  height: 243px;
  box-sizing: border-box;
  border-top: 2px solid #eeeff0;
  background: #fdfdfd;
}
.tabs a {
  position: relative;
  display: flex;
  flex-direction: column;
  align-items: center;
  gap: 26px;
  padding-top: 30px;
  color: #a3a5a5;
  font-size: 31px;
  line-height: 40px;
  font-weight: 500;
  text-decoration: none;
}
.tabs a.on { color: #0f6b69; font-weight: 600; }
.tabs a.on::before {
  content: "";
  position: absolute;
  top: 0;
  width: 96px;
  height: 9px;
  border-radius: 5px;
  background: #0f6b69;
}
.tabs svg { height: 60px; fill: currentColor; }
.tabs .s { fill: none; stroke: currentColor; stroke-width: 4; stroke-linejoin: round; }

.assistant {
  position: absolute;
  right: 48px;
  bottom: 255px;
  display: grid;
  place-items: center;
  width: 168px;
  height: 168px;
  border-radius: 50%;
  background: #0b3433;
  box-shadow: 0 12px 60px rgba(11, 52, 51, .3);
}
.assistant svg { fill: none; stroke: #e2faf6; stroke-width: 3; }
.assistant rect { fill: #e2faf6; stroke: none; }
</style>
